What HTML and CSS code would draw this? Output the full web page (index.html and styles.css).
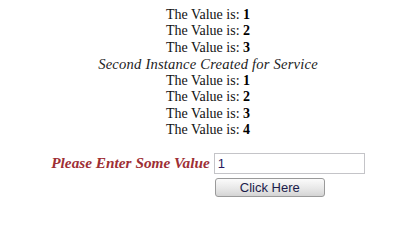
FILE: index.html
```html
<!DOCTYPE html>
<html lang="en">
<head>
    <meta charset="UTF-8">
    <title>Service Instance Demo</title>
    <link rel="stylesheet" href="styles.css">
</head>
<body>
    <div class="page">
        <div class="values">
            <div>The Value is: <b>1</b></div>
            <div>The Value is: <b>2</b></div>
            <div>The Value is: <b>3</b></div>
            <div class="note">Second Instance Created for Service</div>
            <div>The Value is: <b>1</b></div>
            <div>The Value is: <b>2</b></div>
            <div>The Value is: <b>3</b></div>
            <div>The Value is: <b>4</b></div>
        </div>

        <div class="entry">
            <label class="prompt" for="someValue">Please Enter Some Value</label>
            <input type="text" id="someValue" value="1">
            <button class="click-btn">Click Here</button>
        </div>
    </div>
</body>
</html>
```

FILE: styles.css
```css
body {
    margin: 0;
    padding: 7px 0 0 16px;
    background-color: #fff;
    font-family: "Liberation Serif", "Times New Roman", serif;
    color: #111;
}
.page {
    text-align: center;
}
.values {
    font-size: 14px;
    line-height: 16.43px;
}
.values b {
    color: #000;
}
.note {
    font-style: italic;
    font-size: 14.6px;
    letter-spacing: 0.2px;
    color: #222;
}
.entry {
    display: grid;
    grid-template-columns: auto 151px;
    justify-content: center;
    align-items: center;
    column-gap: 4px;
    row-gap: 4px;
    margin-top: 14px;
}
.prompt {
    font-size: 15.3px;
    font-weight: bold;
    font-style: italic;
    color: #9e2f35;
    text-align: right;
}
#someValue {
    box-sizing: border-box;
    width: 151px;
    height: 21px;
    margin: 0;
    padding: 0 3px;
    border: 1px solid #c4c4c8;
    font-family: "Liberation Sans", Arial, sans-serif;
    font-size: 13px;
    color: #2a1a5e; /* value text */
}
.click-btn {
    grid-column: 2;
    justify-self: start;
    width: 110px;
    height: 19px;
    margin-left: 1px;
    padding: 0;
    border: 1px solid #9a9a9a;
    border-radius: 3px;
    background: linear-gradient(#fbfbfb, #e6e6e6 60%, #d4d4d4);
    font-family: "Liberation Sans", Arial, sans-serif;
    font-size: 13px;
    color: #1c1c4a;
    cursor: pointer;
}
```
